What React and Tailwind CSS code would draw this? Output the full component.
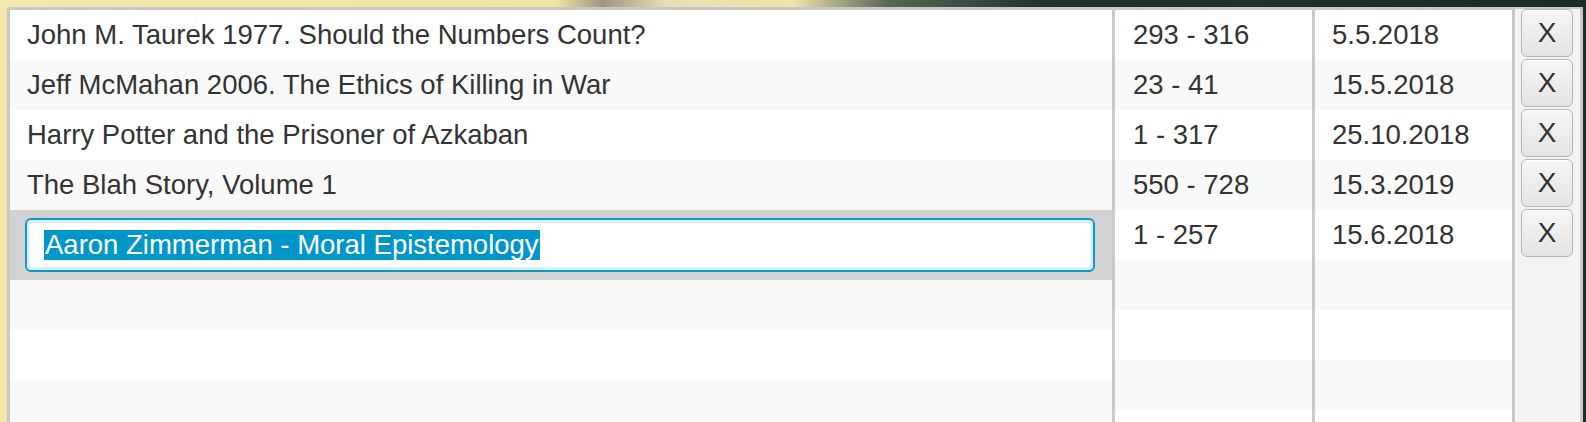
import React from 'react';

const titles = [
  'John M. Taurek 1977. Should the Numbers Count?',
  'Jeff McMahan 2006. The Ethics of Killing in War',
  'Harry Potter and the Prisoner of Azkaban',
  'The Blah Story, Volume 1',
];

const pages = ['293 - 316', '23 - 41', '1 - 317', '550 - 728', '1 - 257'];
const dates = ['5.5.2018', '15.5.2018', '25.10.2018', '15.3.2019', '15.6.2018'];

const font = { fontFamily: '"Liberation Sans", Arial, sans-serif' };

function stripe(i) {
  return i % 2 === 0 ? 'bg-white' : 'bg-[#f9f9f9]';
}

function TextColumn({ items, width, pad }) {
  const rows = Array.from({ length: 9 }, (_, i) => items[i] ?? '');
  return (
    <div className={`${width} shrink-0 flex flex-col overflow-hidden`}>
      {rows.map((text, i) => (
        <div key={i} className={`h-[50px] shrink-0 flex items-center ${pad} ${stripe(i)} text-[27.5px] text-[#333]`}>
          {text}
        </div>
      ))}
    </div>
  );
}

export default function App() {
  return (
    <div
      className="w-[1586px] h-[422px] overflow-hidden pt-[7px] pl-[7px] pr-[3px] bg-[linear-gradient(to_right,#f1e9ac_0%,#efe6a4_35%,#9a9880_38%,#e6dfb4_42%,#ece4aa_50%,#5a6458_56%,#23302c_66%,#1d2a27_100%)]"
      style={font}
    >
      <div className="flex h-[415px] bg-[#c8c8c8] pt-[3px] px-[3px] overflow-hidden">
        {/* titles */}
        <div className="w-[1102px] shrink-0 flex flex-col overflow-hidden">
          {titles.map((t, i) => (
            <div key={i} className={`h-[50px] shrink-0 flex items-center pl-[17px] ${stripe(i)} text-[27.5px] text-[#333]`}>
              {t}
            </div>
          ))}
          <div className="h-[70px] shrink-0 bg-[#d2d2d2] pt-[8px] pl-[15px] pr-[17px]">
            <div className="h-[54px] rounded-[6px] border-2 border-[#0a9ad0] bg-[#dcf0f9] p-[3px]">
              <div className="h-full rounded-[3px] bg-white flex items-center pl-[14px]">
                <span className="bg-[#0096c9] text-white text-[27.5px] leading-[30px] px-[1px]">
                  Aaron Zimmerman - Moral Epistemology
                </span>
              </div>
            </div>
          </div>
          {[0, 1, 2, 3].map((i) => (
            <div key={i} className={`h-[50px] shrink-0 ${i % 2 === 0 ? 'bg-[#f9f9f9]' : 'bg-white'}`} />
          ))}
        </div>

        <div className="w-[3px] shrink-0" />
        <TextColumn items={pages} width="w-[197px]" pad="pl-[18px]" />
        <div className="w-[3px] shrink-0" />
        <TextColumn items={dates} width="w-[197px]" pad="pl-[17px]" />
        <div className="w-[3px] shrink-0" />

        {/* delete buttons */}
        <div className="w-[65px] shrink-0 bg-[#f3f3f3] flex flex-col pl-[6px] -mt-[1px]">
          {pages.map((_, i) => (
            <div key={i} className="h-[50px] shrink-0">
              <button
                type="button"
                className="w-[52px] h-[48px] rounded-[6px] border border-[#b4b4b4] bg-[linear-gradient(to_bottom,#f6f6f6,#e4e4e4)] shadow-[inset_0_1px_0_#ffffff] text-[28px] text-[#333] flex items-center justify-center"
              >
                X
              </button>
            </div>
          ))}
        </div>
        <div className="w-[3px] shrink-0" />
      </div>
    </div>
  );
}
